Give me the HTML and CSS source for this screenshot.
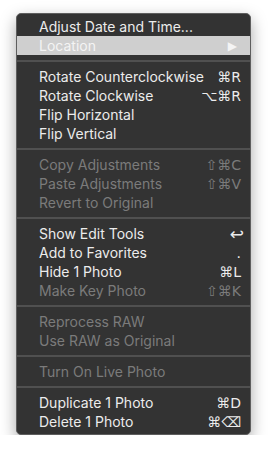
FILE: index.html
```html
<!DOCTYPE html>
<html lang="en">
<head>
  <meta charset="UTF-8" />
  <title>Photo Menu</title>
  <link rel="stylesheet" href="styles.css">
</head>
<body>
  <div class="menu">
    <div class="item"><span>Adjust Date and Time...</span></div>
    <div class="item selected"><span>Location</span><span class="key arrow">&#9654;</span></div>
    <div class="sep"></div>
    <div class="item"><span>Rotate Counterclockwise</span><span class="key">&#8984;R</span></div>
    <div class="item"><span>Rotate Clockwise</span><span class="key">&#8997;&#8984;R</span></div>
    <div class="item"><span>Flip Horizontal</span></div>
    <div class="item"><span>Flip Vertical</span></div>
    <div class="sep"></div>
    <div class="item off"><span>Copy Adjustments</span><span class="key">&#8679;&#8984;C</span></div>
    <div class="item off"><span>Paste Adjustments</span><span class="key">&#8679;&#8984;V</span></div>
    <div class="item off"><span>Revert to Original</span></div>
    <div class="sep"></div>
    <div class="item"><span>Show Edit Tools</span><span class="key ret">&#8617;</span></div>
    <div class="item"><span>Add to Favorites</span><span class="key">.</span></div>
    <div class="item"><span>Hide 1 Photo</span><span class="key">&#8984;L</span></div>
    <div class="item off"><span>Make Key Photo</span><span class="key">&#8679;&#8984;K</span></div>
    <div class="sep"></div>
    <div class="item off"><span>Reprocess RAW</span></div>
    <div class="item off"><span>Use RAW as Original</span></div>
    <div class="sep"></div>
    <div class="item off"><span>Turn On Live Photo</span></div>
    <div class="sep"></div>
    <div class="item"><span>Duplicate 1 Photo</span><span class="key">&#8984;D</span></div>
    <div class="item"><span>Delete 1 Photo</span><span class="key">&#8984;&#9003;</span></div>
  </div>
</body>
</html>
```

FILE: styles.css
```css
body {
  margin: 0;
  background-color: #fff;
  font-family: Inter, "Noto Sans", sans-serif;
}

.menu {
  margin: 13px 0 0 16px;
  width: 233px;
  padding: 3px 0;
  background-color: #333333;
  border: 1px solid #5e5e5e;
  border-radius: 5px;
  box-shadow: 0 6px 16px rgba(0, 0, 0, 0.35);
}

.item {
  display: flex;
  justify-content: space-between;
  align-items: center;
  height: 19px;
  padding: 0 9px 0 22px;
  font-size: 14px;
  color: #ececec;
}

.item.off {
  color: #7b7b7b;
}

.item.selected {
  background-color: #cfcfcf;
  color: #f4f4f4;
}

.key {
  font-family: "DejaVu Sans", sans-serif;
  font-size: 14px;
}

.ret {
  font-size: 17px;
  margin-right: -3px;
}

.arrow {
  font-size: 12px;
  margin-right: 4px;
}

.sep {
  height: 12px;
  display: flex;
  align-items: center;
}

.sep::before {
  content: "";
  flex: 1;
  height: 2px;
  background-color: #505050;
}
```
